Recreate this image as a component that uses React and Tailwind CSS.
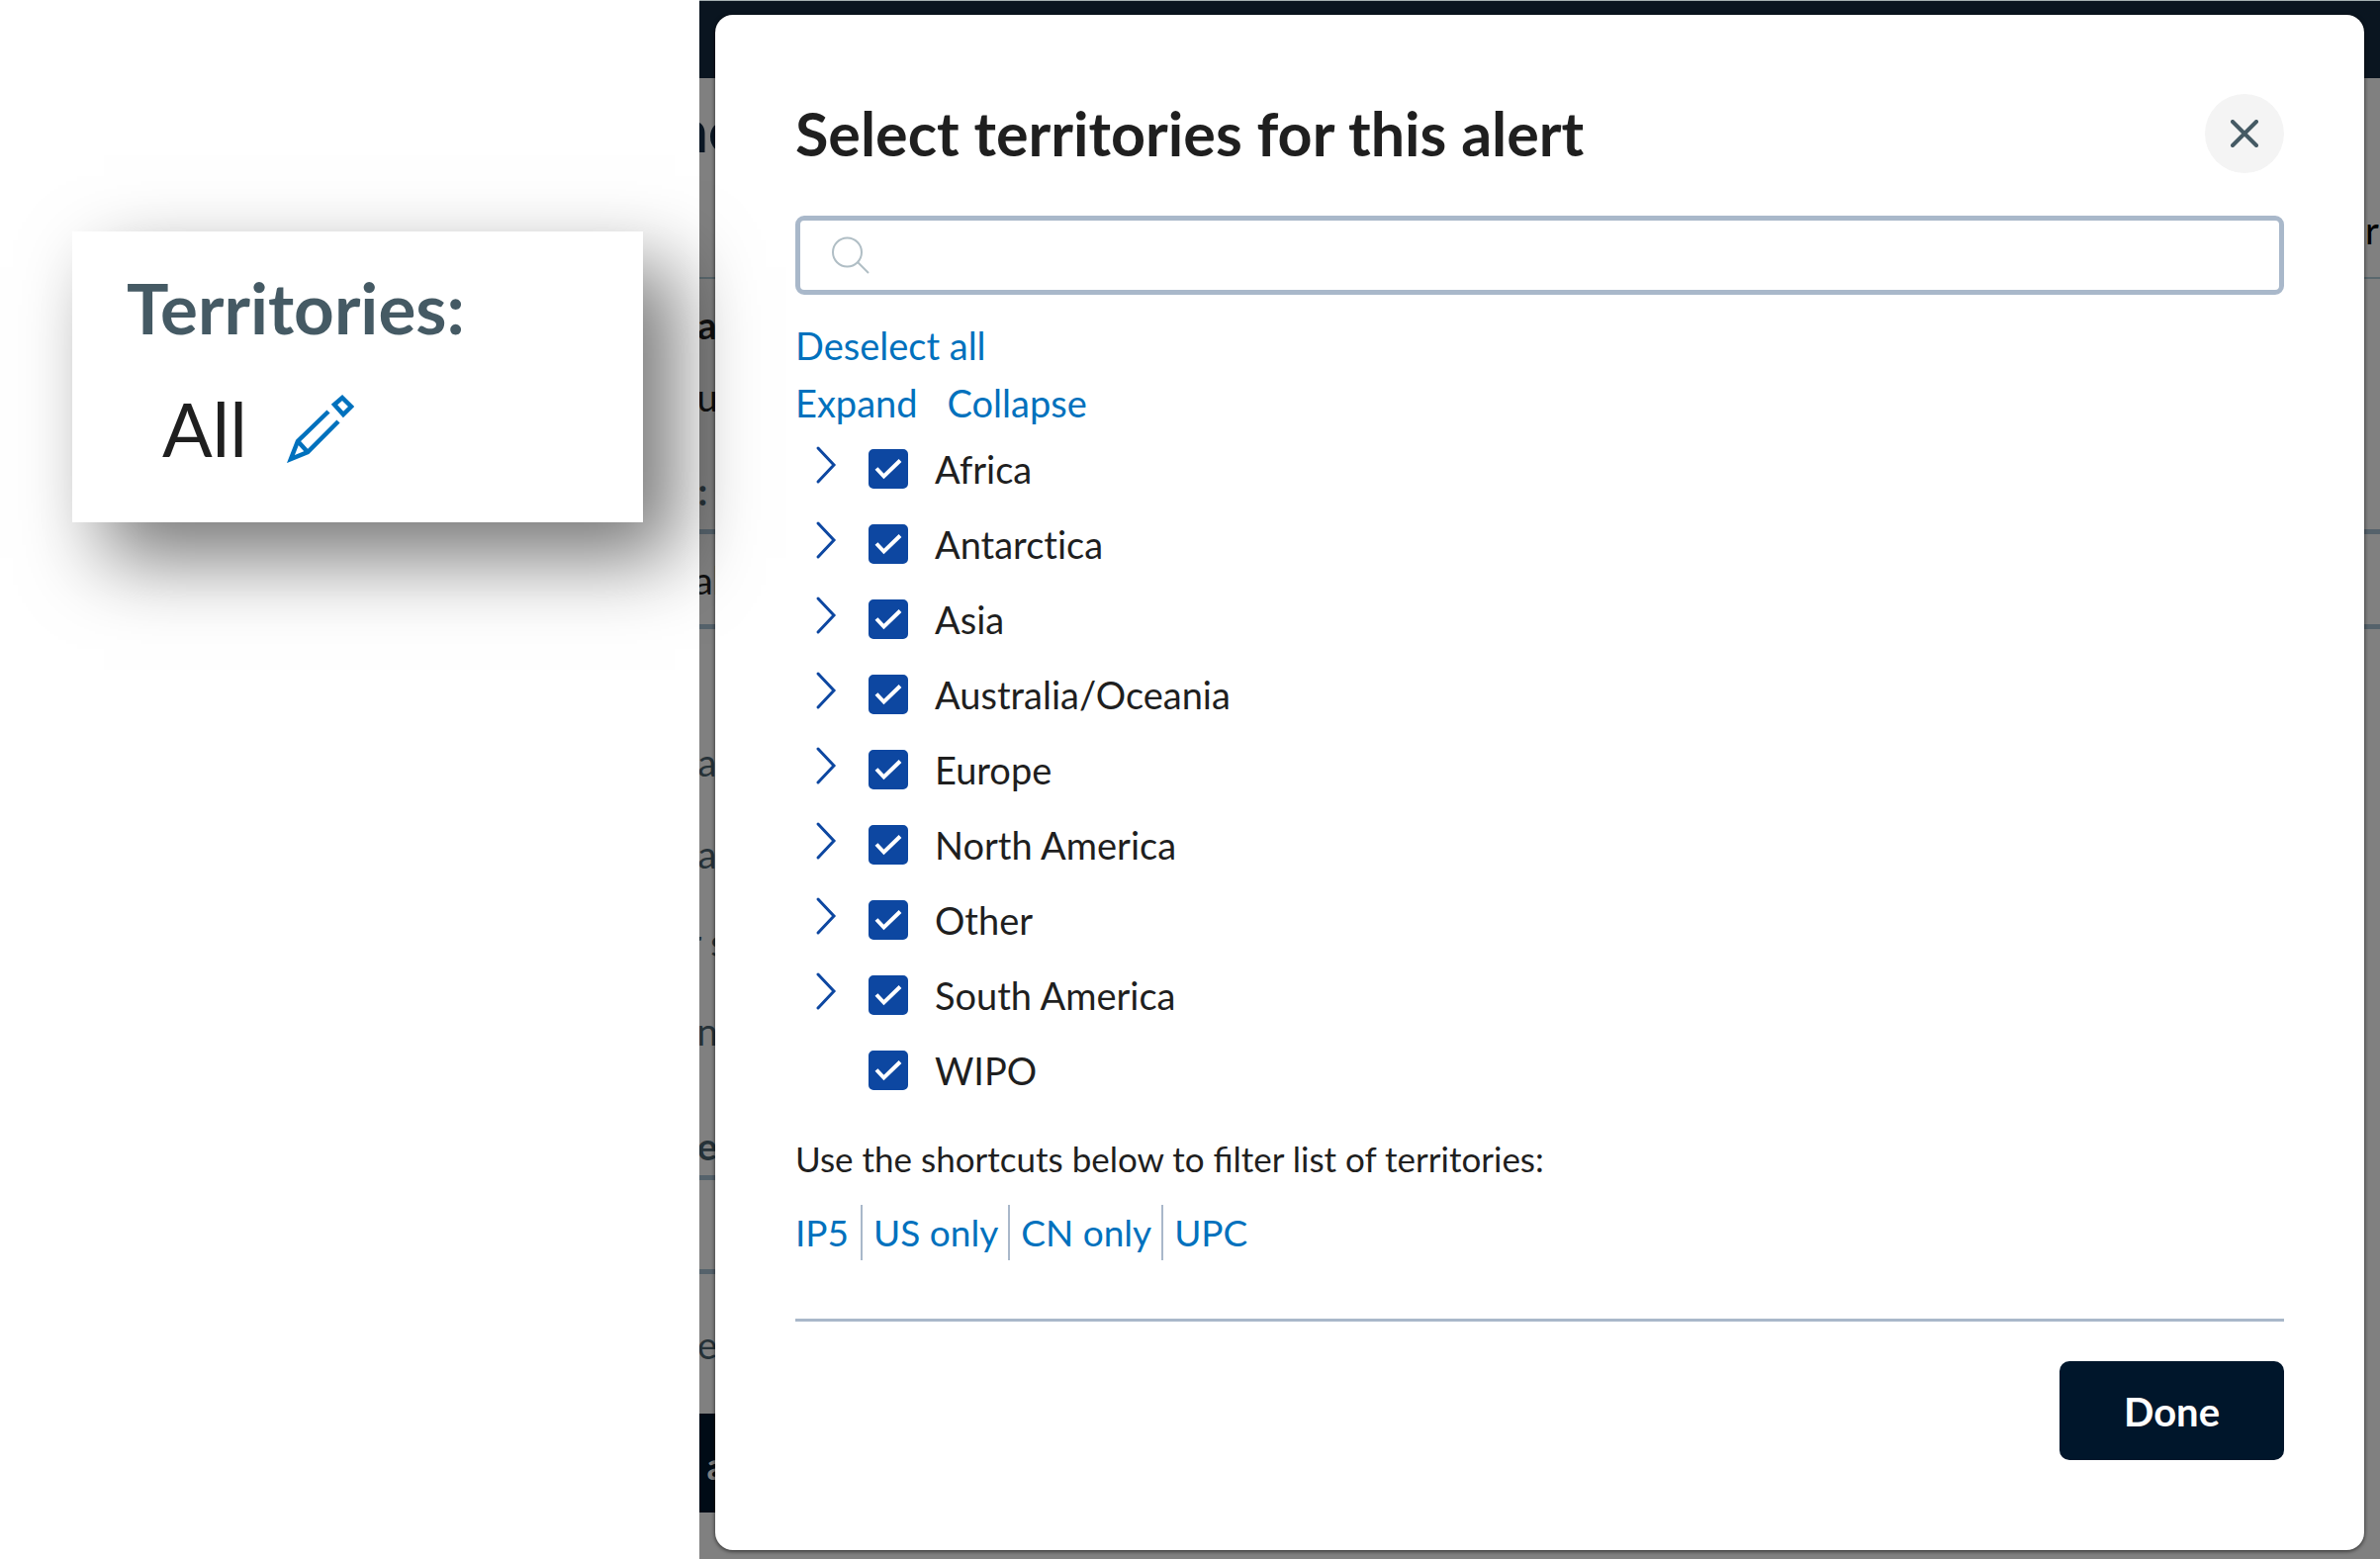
import React, { useState } from 'react';

const TERRITORIES = [
  { name: 'Africa', children: true },
  { name: 'Antarctica', children: true },
  { name: 'Asia', children: true },
  { name: 'Australia/Oceania', children: true },
  { name: 'Europe', children: true },
  { name: 'North America', children: true },
  { name: 'Other', children: true },
  { name: 'South America', children: true },
  { name: 'WIPO', children: false },
];

const SHORTCUTS = ['IP5', 'US only', 'CN only', 'UPC'];

const PencilIcon = () => (
  <svg viewBox="0 0 68 70" className="h-[70px] w-[68px]" fill="none" stroke="#0071bd" strokeWidth="4.500">
    <path d="M42 18 11 48 4 66 21 59 52 28" />
    <path d="M11 48 21 59" />
    <path d="M56 4 65 13 57 21 48 11Z" />
  </svg>
);

const SearchIcon = () => (
  <svg viewBox="0 0 38 38" className="h-[38px] w-[38px] shrink-0" fill="none" stroke="#b0bec5" strokeWidth="2">
    <circle cx="15.5" cy="16" r="14.5" />
    <path d="M26 26 37 37" />
  </svg>
);

// One slice of the page that is dimmed behind the dialog
const Band = ({ className = '', text, end }) => (
  <div className={`flex items-center justify-between overflow-hidden whitespace-pre ${className}`}>
    <span className="flex w-4 justify-center">{text}</span>
    <span className="flex w-4 justify-center">{end}</span>
  </div>
);

const DimmedPage = () => (
  <div aria-hidden="true" className="col-start-1 row-start-1 flex flex-col overflow-hidden bg-[#808080] text-[38px] leading-none text-[#263238]">
    <Band className="h-[79px] border-t border-[#a5b0b2] bg-[#0a1520]" />
    <Band className="h-[104px] text-[60px] font-bold text-[#0a1724]" text="ne" />
    <Band className="h-[99px] border-b-2 border-[#5a686e] text-black" end="r" />
    <Band className="h-[92px] font-bold text-[#111]" text="a" />
    <Band className="h-[54px] text-[#111]" text="u" />
    <Band className="h-[112px] border-b-5 border-[#55626b] pt-7 font-bold" text=": " />
    <Band className="h-[96px] border-b-5 border-[#55626b] text-[#111]" text="tab" />
    <Band className="h-[187px] pt-20" text="a" />
    <Band className="h-[80px]" text="a" />
    <Band className="h-[98px]" text="r s" />
    <Band className="h-[82px]" text="n" />
    <Band className="h-[105px] pt-11 font-bold" text="e" />
    <div className="h-[5px] w-8 bg-[#55626b]"></div>
    <div className="h-[90px]"></div>
    <div className="h-[5px] w-8 bg-[#55626b]"></div>
    <Band className="h-[141px]" text="e" />
    <div className="h-[100px] w-8 bg-[#000b16]">
      <Band className="h-full pt-1 font-bold text-[#808080]" text="  a" />
    </div>
  </div>
);

const TerritoryRow = ({ territory, checked, onToggle }) => (
  <li className="flex h-[76px] items-center">
    <div className="w-[74px] self-start pl-5">
      {territory.children && (
        <button type="button" aria-label={`Expand ${territory.name}`} className="flex h-[68px] items-center">
          <svg viewBox="0 0 22 40" className="h-10 w-[22px]" fill="none" stroke="#0d47a1" strokeWidth="3" strokeLinecap="round">
            <path d="M3 3 19 20 3 37" />
          </svg>
        </button>
      )}
    </div>
    <label className="flex items-center gap-[27px]">
      <span className="grid">
        <input
          type="checkbox"
          checked={checked}
          onChange={onToggle}
          className="peer col-start-1 row-start-1 h-10 w-10 appearance-none rounded-[5px] border-2 border-[#0d47a1] checked:bg-[#0d47a1]"
        />
        <svg viewBox="0 0 40 40" className="pointer-events-none invisible col-start-1 row-start-1 h-10 w-10 peer-checked:visible" fill="none" stroke="#fff" strokeWidth="4">
          <path d="M8 19.500 15.500 27.500 32 11.500" />
        </svg>
      </span>
      {territory.name}
    </label>
  </li>
);

const App = () => {
  const [selected, setSelected] = useState(TERRITORIES.map((t) => t.name));

  const toggle = (name) => {
    setSelected((prev) => (prev.includes(name) ? prev.filter((n) => n !== name) : [...prev, name]));
  };

  return (
    <div className="grid min-h-screen grid-cols-[707px_1fr] bg-white font-[Lato,sans-serif] text-[38px] text-[#1f1f1f]">

      {/* Current selection */}
      <aside className="pointer-events-none relative z-10 pt-[234px] pl-[73px]">
        <div className="pointer-events-auto flex h-[294px] w-[577px] flex-col bg-white pt-[35px] pl-[55px] shadow-[32px_36px_76px_rgba(0,0,0,0.54)]">
          <h2 className="text-[71px] leading-[84px] font-bold text-[#455a64]">Territories:</h2>
          <div className="flex items-center gap-10 pt-9 pl-9">
            <span className="text-[75px] leading-[88px]">All</span>
            <button type="button" aria-label="Edit territories">
              <PencilIcon />
            </button>
          </div>
        </div>
      </aside>

      <section className="grid overflow-hidden">
        <DimmedPage />

        {/* Dialog */}
        <div role="dialog" aria-labelledby="dialog-title" className="col-start-1 row-start-1 mx-4 mt-[15px] mb-[9px] flex flex-col rounded-[18px] bg-white px-[81px] pt-20 shadow-[0_1px_4px_rgba(0,0,0,0.7)]">
          <header className="flex h-20 items-center justify-between">
            <h1 id="dialog-title" className="text-[61px] leading-[72px] font-bold">Select territories for this alert</h1>
            <button type="button" aria-label="Close" className="flex h-20 w-20 items-center justify-center rounded-full bg-[#f4f4f4]">
              <svg viewBox="0 0 28 28" className="h-7 w-7" fill="none" stroke="#455a64" strokeWidth="4" strokeLinecap="round">
                <path d="M2 2 26 26M26 2 2 26" />
              </svg>
            </button>
          </header>

          <label className="mt-[43px] flex h-20 items-center gap-4 rounded-[9px] border-5 border-[#a9b8ca] px-8">
            <SearchIcon />
            <input type="text" aria-label="Search territories" className="w-full outline-none" />
          </label>

          <div className="mt-[22px] flex flex-col items-start leading-[58px] text-[#0071bd]">
            <button type="button" onClick={() => setSelected([])}>Deselect all</button>
            <div className="flex gap-[30px]">
              <button type="button">Expand</button>
              <button type="button">Collapse</button>
            </div>
          </div>

          <ul className="[font-variant-ligatures:none]">
            {TERRITORIES.map((t) => (
              <TerritoryRow key={t.name} territory={t} checked={selected.includes(t.name)} onToggle={() => toggle(t.name)} />
            ))}
          </ul>

          <p className="mt-6 text-[35px] leading-[54px]">Use the shortcuts below to filter list of territories:</p>
          <div className="mt-5 flex h-14 items-center text-[37px] text-[#0071bd]">
            {SHORTCUTS.map((s, i) => (
              <button key={s} type="button" className={`h-14 leading-[56px] ${i === 0 ? 'pr-3' : 'border-l-2 border-[#a9b8ca] pr-[10px] pl-[11px]'}`}>
                {s}
              </button>
            ))}
          </div>

          <footer className="mt-[59px] flex justify-end border-t-3 border-[#a9b8ca] pt-10">
            <button type="button" className="h-[100px] w-[227px] rounded-[10px] bg-[#00162b] pt-[2px] text-[40px] font-bold text-white">Done</button>
          </footer>
        </div>
      </section>
    </div>
  );
};

export default App;
